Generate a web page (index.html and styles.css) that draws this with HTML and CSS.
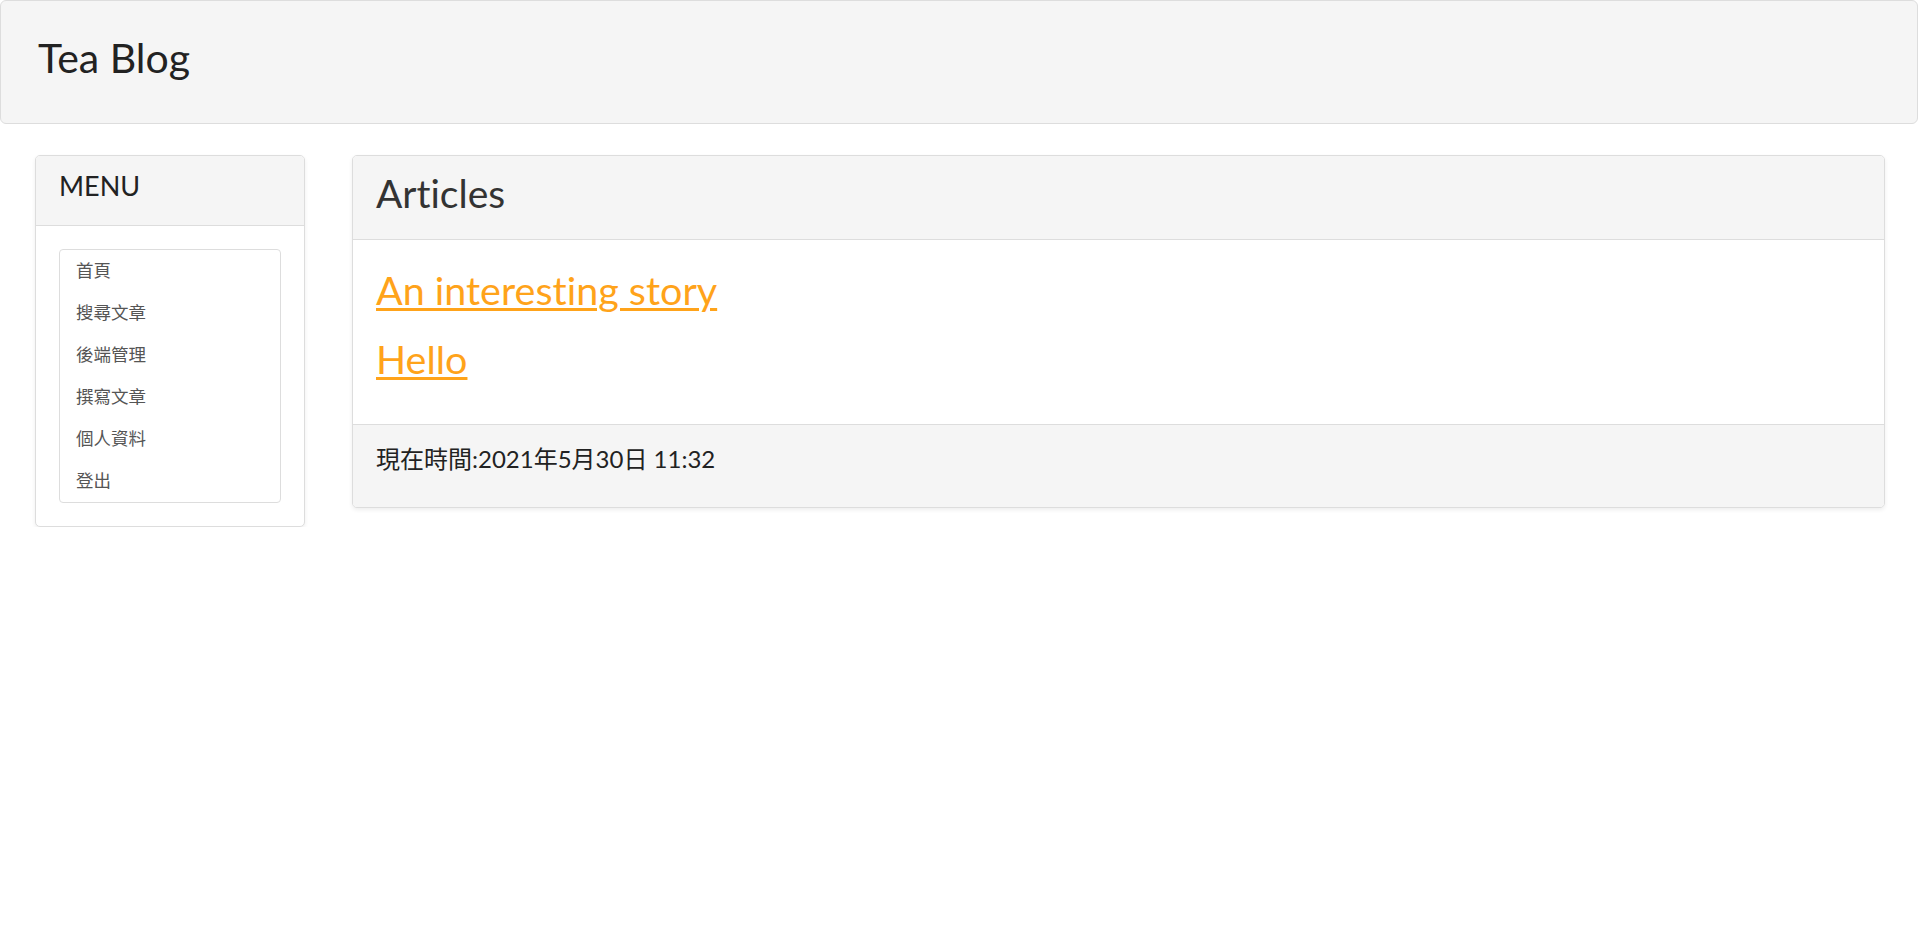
FILE: index.html
```html
<!DOCTYPE html>
<html lang="zh-Hant">
<head>
<meta charset="utf-8">
<title>Tea Blog</title>
<link rel="stylesheet" href="styles.css">
</head>
<body>
<header class="topbar">
  <div class="brand">Tea Blog</div>
</header>
<div class="layout">
  <aside class="panel menu-panel">
    <div class="panel-heading menu-heading">MENU</div>
    <div class="menu-body">
      <ul class="list-group">
        <li class="list-item"><a href="#">首頁</a></li>
        <li class="list-item"><a href="#">搜尋文章</a></li>
        <li class="list-item"><a href="#">後端管理</a></li>
        <li class="list-item"><a href="#">撰寫文章</a></li>
        <li class="list-item"><a href="#">個人資料</a></li>
        <li class="list-item"><a href="#">登出</a></li>
      </ul>
    </div>
  </aside>
  <main class="panel articles-panel">
    <div class="panel-heading articles-heading">Articles</div>
    <div class="articles-body">
      <a class="article-link" href="#">An interesting story</a>
      <a class="article-link" href="#">Hello</a>
    </div>
    <div class="panel-footer">現在時間:2021年5月30日 11:32</div>
  </main>
</div>
</body>
</html>
```

FILE: styles.css
```css
* { box-sizing: border-box; }

html, body {
  margin: 0;
  padding: 0;
  background: #fff;
}

body {
  font-family: Lato, "Noto Sans CJK TC", sans-serif;
  font-variant-ligatures: none;
  color: #333;
}

.topbar {
  height: 124px;
  margin-right: 2px;
  background: #f5f5f5;
  border: 1px solid #ddd;
  border-radius: 6px;
  padding: 32px 0 0 37px;
}

.brand {
  font-size: 41px;
  line-height: 50px;
  color: #222;
}

.layout {
  display: flex;
  align-items: flex-start;
  gap: 47px;
  padding: 31px 35px 0 35px;
}

.panel {
  background: #fff;
  border: 1px solid #ddd;
  border-radius: 5px;
  box-shadow: 0 2px 4px rgba(0, 0, 0, 0.07);
  overflow: hidden;
}

.panel-heading {
  background: #f5f5f5;
  border-bottom: 1px solid #ddd;
  color: #333;
}

.menu-panel {
  width: 270px;
  flex: none;
}

.menu-heading {
  height: 70px;
  padding: 13px 0 0 23px;
  font-size: 27px;
  line-height: 34px;
  color: #222;
}

.menu-body {
  padding: 23px;
}

.list-group {
  list-style: none;
  margin: 0;
  padding: 0;
  border: 1px solid #ddd;
  border-radius: 4px;
}

.list-item a {
  display: block;
  height: 42px;
  line-height: 42px;
  padding: 0 16px;
  font-size: 17.5px;
  color: #555;
  text-decoration: none;
}

.articles-panel {
  flex: 1;
}

.articles-heading {
  height: 84px;
  padding: 11px 0 0 23px;
  font-size: 39px;
  line-height: 52px;
}

.articles-body {
  display: flex;
  flex-direction: column;
  align-items: flex-start;
  gap: 22px;
  height: 184px;
  padding: 26px 23px 0 23px;
}

.article-link {
  font-size: 39.5px;
  line-height: 47px;
  color: #ffa31a;
  text-decoration: underline;
  text-decoration-thickness: 3px;
  text-underline-offset: 3px;
}

.panel-footer {
  background: #f5f5f5;
  border-top: 1px solid #ddd;
  height: 83px;
  padding: 16px 23px 0 23px;
  font-size: 24px;
  line-height: 36px;
  color: #222;
}
```
